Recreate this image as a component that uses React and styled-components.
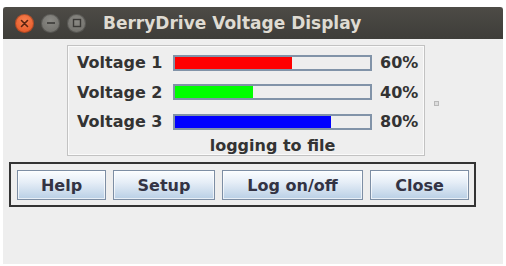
import React from "react";
import styled, { createGlobalStyle } from "styled-components";

const Global = createGlobalStyle`
  html, body { margin: 0; padding: 0; background: #ffffff; }
  body { font-family: "DejaVu Sans", "Liberation Sans", sans-serif; }
`;

const Window = styled.div`
  margin: 7px 0 0 3px;
  width: 500px;
  height: 257px;
  display: flex;
  flex-direction: column;
  background: #eeeeee;
`;

const TitleBar = styled.div`
  height: 32px;
  flex: none;
  display: flex;
  align-items: center;
  padding-left: 12px;
  background: linear-gradient(#4d4b46, #3e3d39);
  border-radius: 3px 3px 0 0;
`;

const WinButtons = styled.div`
  display: flex;
  gap: 7px;
  margin-right: 17px;
`;

const WinBtn = styled.div`
  width: 19px;
  height: 19px;
  border-radius: 50%;
  display: flex;
  align-items: center;
  justify-content: center;
  background: ${(p) =>
    p.$close
      ? "radial-gradient(circle at 50% 35%, #f7804f, #e0501f)"
      : "radial-gradient(circle at 50% 35%, #8b8a85, #6a6964)"};
  box-shadow: inset 0 0 0 1px rgba(0,0,0,0.25);
`;

const Title = styled.div`
  color: #dfdbd2;
  font-family: "DejaVu Sans", sans-serif;
  font-weight: bold;
  font-size: 17px;
`;

const Body = styled.div`
  flex: 1;
  display: flex;
  flex-direction: column;
`;

const TopRow = styled.div`
  display: flex;
  justify-content: center;
  align-items: center;
  gap: 9px;
  margin-top: 6px;
`;

const Box = styled.div`
  width: 347px;
  height: 107px;
  border: 1px solid #c2c2c2;
  box-shadow: inset 0 0 0 1px #fafafa;
  display: grid;
  grid-template-columns: 88px 199px auto;
  grid-template-rows: 29.5px 29.5px 29.5px 18px;
  column-gap: 8px;
  align-content: start;
  align-items: center;
  padding: 2px 0 0 9px;
  box-sizing: content-box;
`;

const Label = styled.div`
  font-weight: bold;
  font-size: 16px;
  color: #333333;
  white-space: nowrap;
`;

const Bar = styled.div`
  height: 16px;
  box-sizing: border-box;
  border: 2px solid #8193a8;
  background: #eeeeee;
  display: flex;
`;

const Fill = styled.div`
  height: 100%;
  background: ${(p) => p.$color};
`;

const Status = styled.div`
  grid-column: 2;
  text-align: center;
  font-weight: bold;
  font-size: 16px;
  color: #333333;
  white-space: nowrap;
`;

const Dot = styled.div`
  width: 3px;
  height: 3px;
  border: 1px solid #b8b8b8;
  background: #dcdcdc;
  margin-top: 5px;
`;

const ButtonPanel = styled.div`
  margin: 6px 0 0 6px;
  width: 461px;
  height: 41px;
  border: 2px solid #333333;
  display: flex;
  align-items: flex-start;
  gap: 7px;
  padding: 6px 0 0 6px;
  box-sizing: border-box;
  width: 467px;
  height: 45px;
`;

const Button = styled.button`
  width: ${(p) => p.$w}px;
  height: 30px;
  border: 1px solid #7d8ea4;
  border-radius: 0;
  background: linear-gradient(#fbfdff 0%, #e6eef7 40%, #b9cfe5 100%);
  box-shadow: inset 0 0 0 1px #ffffffaa;
  font-family: "DejaVu Sans", sans-serif;
  font-weight: bold;
  font-size: 16px;
  color: #333344;
  padding: 0;
`;

const rows = [
  { name: "Voltage 1", value: 60, color: "#ff0000" },
  { name: "Voltage 2", value: 40, color: "#00ff00" },
  { name: "Voltage 3", value: 80, color: "#0000ff" },
];

export default function App() {
  return (
    <>
      <Global />
      <Window>
        <TitleBar>
          <WinButtons>
            <WinBtn $close>
              <svg width="9" height="9" viewBox="0 0 9 9">
                <path d="M1.5 1.5 L7.5 7.5 M7.5 1.5 L1.5 7.5" stroke="#5a2410" strokeWidth="1.6" strokeLinecap="round" />
              </svg>
            </WinBtn>
            <WinBtn>
              <svg width="10" height="10" viewBox="0 0 10 10">
                <path d="M1 5 H9" stroke="#3a3936" strokeWidth="1.6" />
              </svg>
            </WinBtn>
            <WinBtn>
              <svg width="10" height="10" viewBox="0 0 10 10">
                <rect x="1.5" y="1.5" width="7" height="7" fill="none" stroke="#3a3936" strokeWidth="1.4" />
              </svg>
            </WinBtn>
          </WinButtons>
          <Title>BerryDrive Voltage Display</Title>
        </TitleBar>
        <Body>
          <TopRow>
            <Box>
              {rows.map((r) => (
                <React.Fragment key={r.name}>
                  <Label>{r.name}</Label>
                  <Bar>
                    <Fill $color={r.color} style={{ width: `${r.value}%` }} />
                  </Bar>
                  <Label>{r.value}%</Label>
                </React.Fragment>
              ))}
              <Status>logging to file</Status>
            </Box>
            <Dot />
          </TopRow>
          <ButtonPanel>
            <Button $w={89}>Help</Button>
            <Button $w={102}>Setup</Button>
            <Button $w={141}>Log on/off</Button>
            <Button $w={99}>Close</Button>
          </ButtonPanel>
        </Body>
      </Window>
    </>
  );
}
